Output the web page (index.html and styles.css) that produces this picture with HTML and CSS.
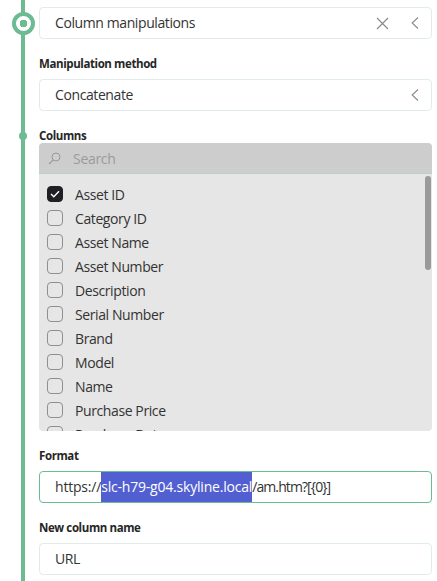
FILE: index.html
```html
<!DOCTYPE html>
<html>
<head>
<meta charset="utf-8">
<link rel="stylesheet" href="styles.css">
</head>
<body>
<div class="page">
  <div class="row step">
    <div class="mark"><span class="ring"></span></div>
    <div class="field">
      <span class="value">Column manipulations</span>
      <span class="icons">
        <svg class="ico" width="13" height="13" viewBox="0 0 13 13"><path d="M1 1 L12 12 M12 1 L1 12" stroke="#8a8a8a" stroke-width="1.2" fill="none"/></svg>
        <svg class="ico chev" width="8" height="12" viewBox="0 0 8 12"><path d="M7 0.5 L1.2 6 L7 11.5" stroke="#8a8a8a" stroke-width="1.1" fill="none"/></svg>
      </span>
    </div>
  </div>

  <div class="row">
    <div class="mark"></div>
    <div class="group">
      <div class="label">Manipulation method</div>
      <div class="field">
        <span class="value">Concatenate</span>
        <span class="icons">
          <svg class="ico chev" width="8" height="12" viewBox="0 0 8 12"><path d="M7 0.5 L1.2 6 L7 11.5" stroke="#8a8a8a" stroke-width="1.1" fill="none"/></svg>
        </span>
      </div>
    </div>
  </div>

  <div class="row">
    <div class="mark"><span class="dot"></span></div>
    <div class="group">
      <div class="label tight">Columns</div>
      <div class="picker">
        <div class="search">
          <svg width="13" height="13" viewBox="0 0 13 13"><circle cx="8" cy="5" r="4" stroke="#9a9a9a" stroke-width="1" fill="none"/><path d="M5.2 7.8 L1 12" stroke="#9a9a9a" stroke-width="1.1"/></svg>
          <span>Search</span>
        </div>
        <div class="list">
          <div class="item"><span class="cb on"><svg width="10" height="8" viewBox="0 0 10 8"><path d="M1 4 L3.8 6.8 L9 1.2" stroke="#fff" stroke-width="1.4" fill="none"/></svg></span>Asset ID</div>
          <div class="item"><span class="cb"></span>Category ID</div>
          <div class="item"><span class="cb"></span>Asset Name</div>
          <div class="item"><span class="cb"></span>Asset Number</div>
          <div class="item"><span class="cb"></span>Description</div>
          <div class="item"><span class="cb"></span>Serial Number</div>
          <div class="item"><span class="cb"></span>Brand</div>
          <div class="item"><span class="cb"></span>Model</div>
          <div class="item"><span class="cb"></span>Name</div>
          <div class="item"><span class="cb"></span>Purchase Price</div>
          <div class="item"><span class="cb"></span>Purchase Date</div>
          <span class="thumb"></span>
        </div>
      </div>
    </div>
  </div>

  <div class="row">
    <div class="mark"></div>
    <div class="group">
      <div class="label">Format</div>
      <div class="field focus"><span class="value fmt">https://<span class="sel">slc-h79-g04.skyline.local</span><span class="tail">/am.htm?[{0}]</span></span></div>
    </div>
  </div>

  <div class="row">
    <div class="mark"></div>
    <div class="group">
      <div class="label">New column name</div>
      <div class="field"><span class="value">URL</span></div>
    </div>
  </div>
</div>
</body>
</html>
```

FILE: styles.css
```css
html, body {
  margin: 0;
  padding: 0;
  background: #ffffff;
}
body {
  font-family: "Open Sans", "Noto Sans", "Liberation Sans", sans-serif;
  color: #333333;
  width: 437px;
  height: 581px;
  overflow: hidden;
}
.page {
  min-height: 581px;
  padding: 7px 5px 0 0;
  box-sizing: border-box;
  background: linear-gradient(to right, transparent 21px, #6cbb93 21px, #6cbb93 25px, transparent 25px);
  display: flex;
  flex-direction: column;
  gap: 15px;
}
.row {
  display: flex;
}
.mark {
  width: 39px;
  flex: none;
  position: relative;
}
.step .mark {
  display: flex;
  align-items: center;
}
.ring {
  width: 15px;
  height: 15px;
  border: 4px solid #6cbb93;
  border-radius: 50%;
  background: radial-gradient(circle, #6cbb93 0 3.6px, #ffffff 4px);
  margin-left: 11.5px;
}
.dot {
  position: absolute;
  left: 19px;
  top: 6px;
  width: 8px;
  height: 8px;
  border-radius: 50%;
  background: #6cbb93;
}
.group {
  flex: 1;
  display: flex;
  flex-direction: column;
  min-width: 0;
}
.label {
  font-size: 11.5px;
  font-weight: 700;
  letter-spacing: -0.4px;
  color: #262626;
  line-height: 16px;
  padding-top: 2px;
  margin-bottom: 7px;
}
.label.tight {
  margin-bottom: -1px;
}
.field {
  flex: 1;
  height: 32px;
  box-sizing: border-box;
  border: 1px solid #e1ece9;
  border-radius: 4px;
  display: flex;
  align-items: center;
  padding-left: 15px;
  font-size: 14px;
  letter-spacing: -0.4px;
  white-space: nowrap;
  overflow: hidden;
}
.field.focus {
  border-color: #6cbb93;
}
.value {
  flex: 1;
  line-height: 30px;
}
.fmt {
  letter-spacing: -0.2px;
}
.tail {
  letter-spacing: -0.9px;
}
.sel {
  display: inline-block;
  background: #525fd1;
  color: #ffffff;
  line-height: 30px;
}
.icons {
  display: flex;
  align-items: center;
  gap: 22px;
  padding-right: 12px;
}
.ico {
  display: block;
}
.picker {
  border-radius: 4px;
  overflow: hidden;
  background: #e6e6e6;
}
.search {
  height: 31px;
  box-sizing: border-box;
  background: #cdcdcd;
  border-bottom: 1px solid #b9d3c8;
  border-radius: 4px 4px 0 0;
  display: flex;
  align-items: center;
  gap: 12px;
  padding-left: 9px;
  font-size: 14px;
  letter-spacing: -0.3px;
  color: #9b9b9b;
}
.search svg {
  display: block;
}
.list {
  position: relative;
  height: 257px;
  overflow: hidden;
  padding-top: 8px;
  box-sizing: border-box;
}
.item {
  height: 24px;
  display: flex;
  align-items: center;
  gap: 12px;
  padding-left: 8px;
  font-size: 14px;
  letter-spacing: -0.4px;
  color: #333333;
}
.cb {
  width: 16px;
  height: 16px;
  box-sizing: border-box;
  border: 1px solid #8f8f8f;
  border-radius: 4px;
  display: flex;
  align-items: center;
  justify-content: center;
  flex: none;
}
.cb.on {
  background: #1f1f24;
  border-color: #1f1f24;
}
.thumb {
  position: absolute;
  right: 1px;
  top: 2px;
  width: 6px;
  height: 94px;
  border-radius: 3px;
  background: #9a9a9a;
}
```
